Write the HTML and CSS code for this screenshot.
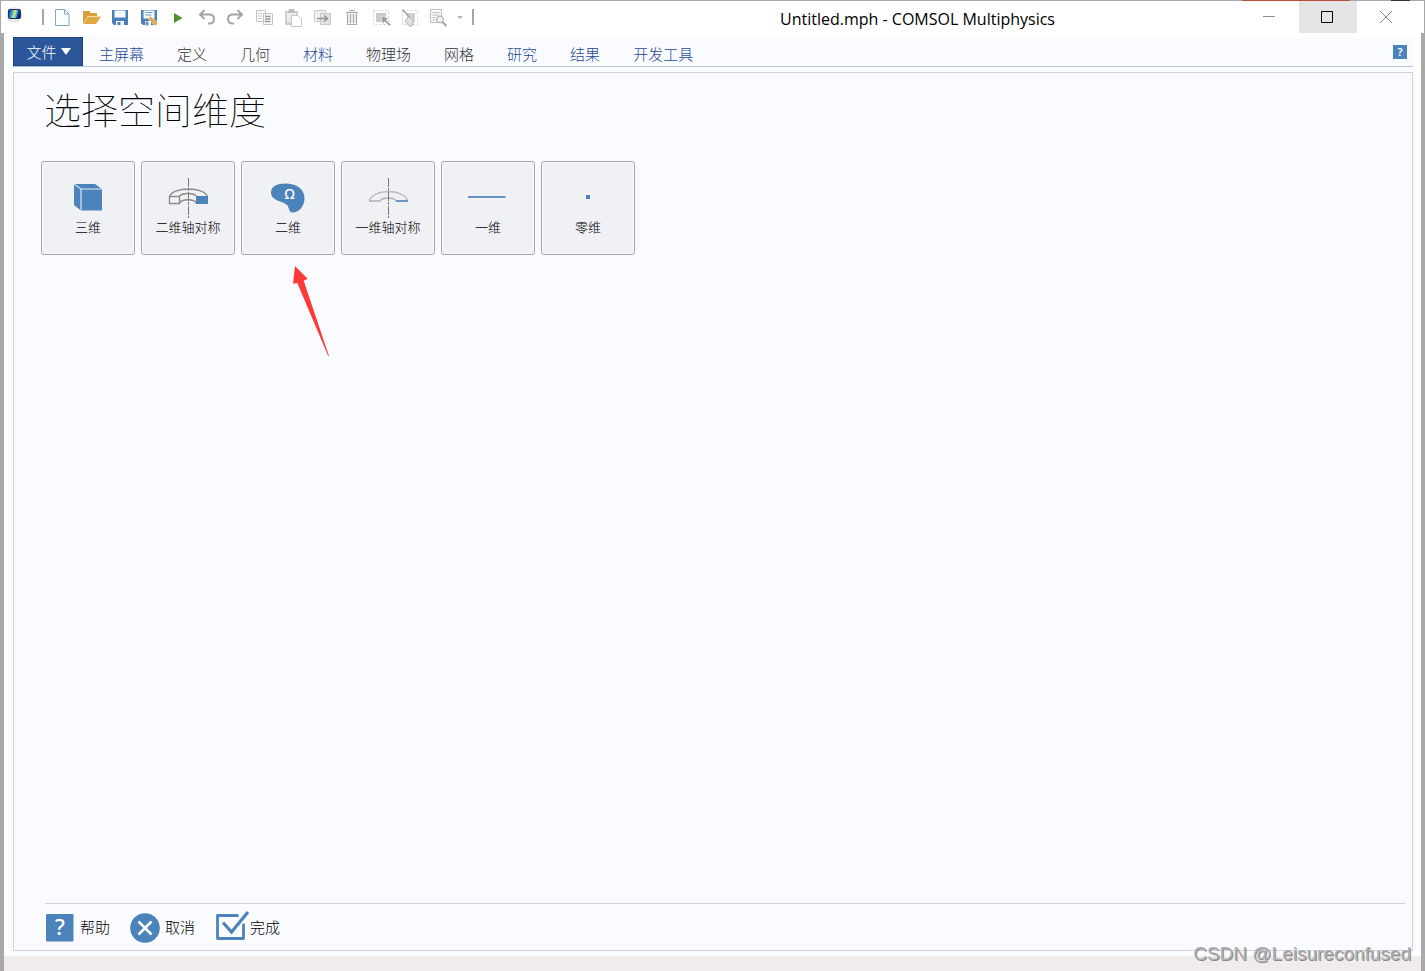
FILE: index.html
```html
<!DOCTYPE html>
<html lang="zh-CN">
<head>
<meta charset="utf-8">
<title>Untitled.mph - COMSOL Multiphysics</title>
<link rel="stylesheet" href="styles.css">
</head>
<body>
<header class="titlebar">
  <svg class="app-icon" viewBox="0 0 20 20" aria-hidden="true">
    <defs>
      <linearGradient id="glow" x1="0" y1="0.3" x2="1" y2="0.5"><stop offset="0" stop-color="#183f98"/><stop offset="0.28" stop-color="#3ea6d8"/><stop offset="0.5" stop-color="#e6e65e"/><stop offset="0.68" stop-color="#58b9dc"/><stop offset="0.82" stop-color="#1845a0"/><stop offset="1" stop-color="#10204f"/></linearGradient>
    </defs>
    <ellipse cx="10" cy="11" rx="8" ry="8" fill="#e9eaee"/>
    <rect x="4" y="5" width="13" height="10" rx="2" fill="#153372"/>
    <rect x="5" y="6" width="11" height="8" rx="1" fill="url(#glow)"/>
  </svg>
  <span class="divider"></span>
  <nav class="tools" aria-label="快速访问工具栏">
    <button aria-label="新建"><svg viewBox="0 0 21 21"><path d="M3.500 2.500h9l4.500 4.500v11.500h-13.500z" fill="#fdfeff" stroke="#7fa6cf"/><path d="M12.500 2.500v4.500h4.500" fill="none" stroke="#7fa6cf"/></svg></button>
    <button aria-label="打开"><svg viewBox="0 0 21 21"><path d="M2 17V4h6l2 2h6v3H7z" fill="#d9a13e"/><path d="M6.500 9.500H20L15 17H2z" fill="#e0a83f"/><path d="M2.500 16.500L7 9.500h12" fill="none" stroke="#f6e2b8" stroke-width=".7"/></svg></button>
    <button aria-label="保存"><svg viewBox="0 0 21 21"><path d="M2 3h16v15H4l-2-2z" fill="#4a80ba"/><path d="M4.500 3.500h11v7h-11zM6 14h8v4H6z" fill="#f5f9fd"/><path d="M7.500 15h3v3h-3z" fill="#4a80ba"/></svg></button>
    <button aria-label="另存为"><svg viewBox="0 0 21 21"><path d="M2 3h16v15H4l-2-2z" fill="#4a80ba"/><path d="M4.500 3.500h11v8h-11zM6 14h6v4H6z" fill="#f5f9fd"/><path d="M6.500 5.500h7M6.500 8h6M7 15h2v3H7z" fill="#4a80ba" stroke="#6f9bca"/><path d="M9.500 9.500l3.500.5 6 6.500-2.500 2.500-6.500-6z" fill="#e2aa49" stroke="#fff" stroke-width=".6"/></svg></button>
    <button aria-label="运行"><svg viewBox="0 0 21 21"><path d="M6 6v10l8.500-5z" fill="#479331"/></svg></button>
    <button aria-label="撤消"><svg viewBox="0 0 21 21"><path d="M7.500 3L3 7.500 7.500 12M3.500 7.500H12q5 0 5 4.500t-5 4.500h-1" fill="none" stroke="#a4a4a4" stroke-width="2"/></svg></button>
    <button aria-label="重做"><svg viewBox="0 0 21 21"><path d="M11.500 3L16 7.500 11.500 12M15.500 7.500H7q-5 0-5 4.500t5 4.500h1" fill="none" stroke="#a4a4a4" stroke-width="2"/></svg></button>
    <button aria-label="复制"><svg viewBox="0 0 21 21"><path d="M1.500 3.500h9v11h-9zM8.500 6.500h9v11h-9z" fill="#fafafa" stroke="#c5c5c5"/><path d="M3 6.500h4M3 9h4M3 11.500h4" stroke="#ccc"/><path d="M10.500 9.500h5M10.500 12h5M10.500 14.500h5" stroke="#969696" stroke-width="1.300"/></svg></button>
    <button aria-label="粘贴"><svg viewBox="0 0 21 21"><path d="M1 4h13v14H1z" fill="#cfcfcf"/><path d="M5 2h5l1 4H4z" fill="#bcbcbc"/><path d="M3 6h9v9H3z" fill="#ececec"/><path d="M7.500 8.500H14l3.500 3.500v7.500h-10z" fill="#fff" stroke="#c4c4c4"/></svg></button>
    <button aria-label="复制选定项"><svg viewBox="0 0 21 21"><path d="M1.500 3.500h11v11h-11z" fill="#f0f0f0" stroke="#cdcdcd"/><path d="M7.500 6.500h10v11h-10z" fill="#e2e2e2" stroke="#c9c9c9"/><path d="M4 11.500h10M11 8.500l3.500 3-3.500 3" fill="none" stroke="#939393" stroke-width="1.500"/></svg></button>
    <button aria-label="删除"><svg viewBox="0 0 21 21"><path d="M4 5.500h12M8 4.500v-1h4v1M5.500 6.500v11h9v-11M8.500 7v9M11.500 7v9" fill="#f1f1f1" stroke="#aaa" stroke-width="1.200"/></svg></button>
    <button aria-label="选择"><svg viewBox="0 0 21 21"><path d="M2.500 3.500h15v14h-15z" fill="none" stroke="#d2d2d2" stroke-dasharray="2 2"/><path d="M5 6h10v9H5z" fill="#cbcbcb"/><path d="M10 9l8 2.500-3 1.500 5 4.500-1.500 1.500-5-4.500-1.500 3z" fill="#9a9a9a" stroke="#fff" stroke-width=".5"/></svg></button>
    <button aria-label="清除选择"><svg viewBox="0 0 21 21"><path d="M2.500 3.500h15v14h-15z" fill="none" stroke="#d2d2d2" stroke-dasharray="2 2"/><path d="M7 6h8v9H7z" fill="#cfcfcf"/><path d="M2.500 2.500l8 9" stroke="#a5a5a5" stroke-width="1.600"/><path d="M9 9.500l4 3.500v5l-3 1.500-5-5z" fill="#e0e0e0" stroke="#b2b2b2"/></svg></button>
    <button aria-label="查找"><svg viewBox="0 0 21 21"><path d="M1.500 2.500h11v13h-11z" fill="#fafafa" stroke="#bdbdbd"/><path d="M3.500 5.500h7M3.500 8h7M3.500 10.500h3M3.500 13h3" stroke="#bdbdbd"/><circle cx="11" cy="12.500" r="3.500" fill="#eee" stroke="#a5a5a5"/><path d="M13.500 15l4 4" stroke="#a5a5a5" stroke-width="2"/></svg></button>
    <button class="more" aria-label="自定义工具栏"><svg viewBox="0 0 21 21"><path d="M3 9h6l-3 3z" fill="#b3b3b3"/></svg></button>
  </nav>
  <span class="divider"></span>
  <h1 class="window-title">Untitled.mph - COMSOL Multiphysics</h1>
  <div class="window-controls">
    <button aria-label="最小化"><svg viewBox="0 0 14 14"><path d="M0 6.500h12" stroke="#8c8c8c"/></svg></button>
    <button class="active" aria-label="最大化"><svg viewBox="0 0 14 14"><path d="M.5 1.500h11v11H.5z" fill="none" stroke="#000"/></svg></button>
    <button aria-label="关闭"><svg viewBox="0 0 14 14"><path d="M1 1l12 12M13 1L1 13" stroke="#888"/></svg></button>
  </div>
</header>

<div class="frame">
  <nav class="ribbon" aria-label="功能区">
    <button class="file">文件<svg viewBox="0 0 10 7" aria-hidden="true"><path d="M0 0h10L5 7z" fill="#fff"/></svg></button>
    <a class="on" href="#home">主屏幕</a>
    <a href="#definitions">定义</a>
    <a href="#geometry">几何</a>
    <a class="on" href="#materials">材料</a>
    <a href="#physics">物理场</a>
    <a href="#mesh">网格</a>
    <a class="on" href="#study">研究</a>
    <a class="on" href="#results">结果</a>
    <a class="on" href="#developer">开发工具</a>
    <button class="ribbon-help" aria-label="帮助">?</button>
  </nav>

  <div class="workspace">
    <main class="panel">
      <h2>选择空间维度</h2>
      <div class="cards">
        <button class="card">
          <svg viewBox="0 0 48 40"><path d="M10 6h21l7 5v21.500H17L10 27z" fill="#4d83bb"/><path d="M10 6l7 5h21M17 11v21" fill="none" stroke="#dbe9f8" stroke-width="1.200"/></svg>
          三维
        </button>
        <button class="card">
          <svg viewBox="0 0 48 40"><path d="M5.500 18.500C9 8.500 40 8.500 43.500 18.500M15.500 18.500c2-4 15-4 17 0M15.500 25.500c2-5 15-5 17 0" fill="none" stroke="#8c8c8c" stroke-width="1.400"/><path d="M5.500 18.500h10v7h-10z" fill="#f4f4f4" stroke="#8c8c8c" stroke-width="1.400"/><path d="M32 18h12v8H32z" fill="#4d83bb"/><path d="M24.500 0v40" stroke="#777" stroke-dasharray="9 1 3 1"/></svg>
          二维轴对称
        </button>
        <div class="card-wrap">
          <button class="card">
            <svg viewBox="0 0 48 40"><path d="M7 14.500C7 8 14 5 23 5.500c10 .5 17.500 6 17.500 14.500 0 8-5 14.500-12 14.500-4 0-3-5-5.500-7.500C19 23 7 23 7 14.500z" fill="#4d83bb"/><text class="omega" x="25.500" y="21" text-anchor="middle">Ω</text></svg>
            二维
          </button>
          <svg class="pointer" viewBox="0 0 40 92" aria-hidden="true"><path d="M3 1l12.700 12.700-4 2L37 91l-.8 0L5.300 18 1 18.700z" fill="#fc3a39"/></svg>
        </div>
        <button class="card">
          <svg viewBox="0 0 48 40"><path d="M5.500 23C8 10.500 41 10.500 43.500 23M32 23c-2-4-14-4-16 0H5" fill="none" stroke="#b1b1b1" stroke-width="1.300"/><path d="M32 23h12" stroke="#4d83bb" stroke-width="1.600"/><path d="M24.500 0v40" stroke="#777" stroke-dasharray="9 1 3 1"/></svg>
          一维轴对称
        </button>
        <button class="card">
          <svg viewBox="0 0 48 40"><path d="M4 19h37.500" stroke="#6496cc" stroke-width="2"/></svg>
          一维
        </button>
        <button class="card">
          <svg viewBox="0 0 48 40"><path d="M22 17h4v4h-4z" fill="#4d83bb"/></svg>
          零维
        </button>
      </div>
      <footer class="actions">
        <button><svg viewBox="0 0 30 30"><rect x="1" y="2" width="27.500" height="27.500" rx="1" fill="#4d83bb"/><text class="question" x="15" y="23" text-anchor="middle">?</text></svg>帮助</button>
        <button><svg viewBox="0 0 30 30"><circle cx="15" cy="16" r="14.800" fill="#4d83bb"/><path d="M8.500 9.500l13 13M21.500 9.500l-13 13" stroke="#fff" stroke-width="2.600"/></svg>取消</button>
        <button><svg viewBox="0 0 30 30"><path d="M23.500 3.500h-21v23h26v-15" fill="none" stroke="#4d83bb" stroke-width="2.800" stroke-linejoin="round"/><path d="M20 16L31 3" fill="none" stroke="#fafbff" stroke-width="6"/><path d="M8 10.500l8.500 9.500L33 0" fill="none" stroke="#4d83bb" stroke-width="3.200"/></svg>完成</button>
      </footer>
    </main>
  </div>
  <div class="statusbar"><span class="watermark">CSDN @Leisureconfused</span></div>
</div>
</body>
</html>
```
FILE: styles.css
```css
* {
  box-sizing: border-box;
}

body {
  margin: 0;
  min-height: 100vh;
  display: flex;
  flex-direction: column;
  font-family: "Noto Sans", "Noto Sans CJK SC", sans-serif;
  color: #000;
  background: #fff;
}

button {
  border: 0;
  padding: 0;
  margin: 0;
  background: none;
  font: inherit;
  color: inherit;
}

svg {
  display: block;
  flex: none;
}

.titlebar {
  display: flex;
  align-items: center;
  height: 33px;
  padding-top: 1px;
  border-left: 1px solid #a7a7a7;
  border-right: 1px solid #a7a7a7;
  background:
    linear-gradient(#333, #333) right 14px top / 19px 1px no-repeat,
    linear-gradient(#b5503f, #b5503f) right 74px top / 108px 1px no-repeat,
    linear-gradient(#a7a7a7, #a7a7a7) top / 100% 1px no-repeat,
    #fff;
}

.app-icon {
  width: 20px;
  height: 20px;
  margin: 0 17px 6px 3px;
}

.divider {
  width: 2px;
  height: 16px;
  margin: 0 0 1px 1px;
  background: #a6a6a6;
}

.tools {
  display: flex;
  margin-left: 4px;
}

.tools button {
  width: 29px;
  height: 21px;
  padding-left: 4px;
}

.tools svg {
  width: 21px;
  height: 21px;
}

.tools .more {
  width: 17px;
  padding: 0;
}

.window-title {
  flex: 1;
  margin: 4px 0 0;
  padding-left: 120px;
  text-align: center;
  font-family: "Open Sans", "Noto Sans", sans-serif;
  font-size: 16px;
  font-weight: 400;
  line-height: 22px;
  white-space: nowrap;
}

.window-controls {
  display: flex;
  align-self: stretch;
  margin-right: 9px;
}

.window-controls button {
  width: 58px;
  display: flex;
  align-items: center;
  justify-content: center;
}

.window-controls .active {
  background: #e4e4e4;
}

.window-controls svg {
  width: 14px;
  height: 14px;
}

.frame {
  flex: 1;
  display: flex;
  flex-direction: column;
  padding-top: 4px;
  border: solid #a9a9a9;
  border-width: 0 4px;
}

.ribbon {
  display: flex;
  align-items: center;
  gap: 33px;
  height: 30px;
  margin: 0 8px 0 9px;
  background: #fafbff;
  border-bottom: 1px solid #b4c7dc;
  font-size: 15px;
  font-weight: 300;
  line-height: 20px;
}

.ribbon a {
  padding-top: 4px;
  color: #333;
  text-decoration: none;
  white-space: nowrap;
}

.ribbon .on {
  color: #1d4a94;
}

.ribbon .file {
  display: flex;
  align-items: center;
  justify-content: center;
  gap: 4px;
  width: 70px;
  height: 29px;
  margin-right: -17px;
  padding-left: 1px;
  background: #2b579a;
  border: 1px solid #1d4480;
  color: #fff;
}

.file svg {
  width: 10px;
  height: 7px;
}

.ribbon .ribbon-help {
  width: 14px;
  height: 14px;
  margin-left: auto;
  margin-right: 6px;
  background: #4d83bb;
  color: #fff;
  font-size: 11px;
  font-weight: 600;
  line-height: 14px;
}

.workspace {
  flex: 1;
  display: flex;
  margin: 0 4px;
  padding: 5px 4px 5px 5px;
  background: #fafbff;
}

.panel {
  flex: 1;
  display: flex;
  flex-direction: column;
  padding: 0 7px 0 27px;
  border: 1px solid #d0d3d7;
}

.panel h2 {
  margin: 8px 0 24px 3px;
  font-family: "Noto Sans CJK SC", sans-serif;
  font-size: 37px;
  font-weight: 100;
  line-height: 56px;
}

.cards {
  display: flex;
  flex-wrap: wrap;
  gap: 6px;
}

.card-wrap {
  position: relative;
}

.card {
  display: flex;
  flex-direction: column;
  align-items: center;
  width: 94px;
  height: 94px;
  padding-top: 16px;
  background: #f0f1f4;
  border: 1px solid #a9a9a9;
  border-radius: 3px;
  box-shadow: inset 0 0 0 1px #f8f9fb;
  font-size: 13px;
  font-weight: 300;
  line-height: 18px;
  white-space: nowrap;
}

.card svg {
  width: 48px;
  height: 40px;
}

.omega {
  font: 500 14px "Noto Sans", sans-serif;
  fill: #fff;
}

.pointer {
  position: absolute;
  left: 51px;
  top: 104px;
  width: 40px;
  height: 92px;
}

.actions {
  display: flex;
  align-items: center;
  gap: 20px;
  height: 47px;
  margin-top: auto;
  margin-left: 4px;
  border-top: 1px solid #d0d3d7;
  font-size: 15px;
  font-weight: 300;
  line-height: 20px;
}

.actions button {
  display: flex;
  align-items: center;
  gap: 5px;
}

.actions svg {
  width: 30px;
  height: 30px;
  overflow: visible;
}

.question {
  font: 500 22px "Noto Sans", sans-serif;
  fill: #fff;
}

.statusbar {
  position: relative;
  height: 15px;
  background: #f0eceb;
}

.watermark {
  position: absolute;
  right: 10px;
  bottom: 5px;
  font-family: "Liberation Sans", Arial, sans-serif;
  font-size: 19px;
  line-height: 24px;
  color: #b0b0b2;
  text-shadow: 1px 1px 0 #8a8a8c;
}
```
